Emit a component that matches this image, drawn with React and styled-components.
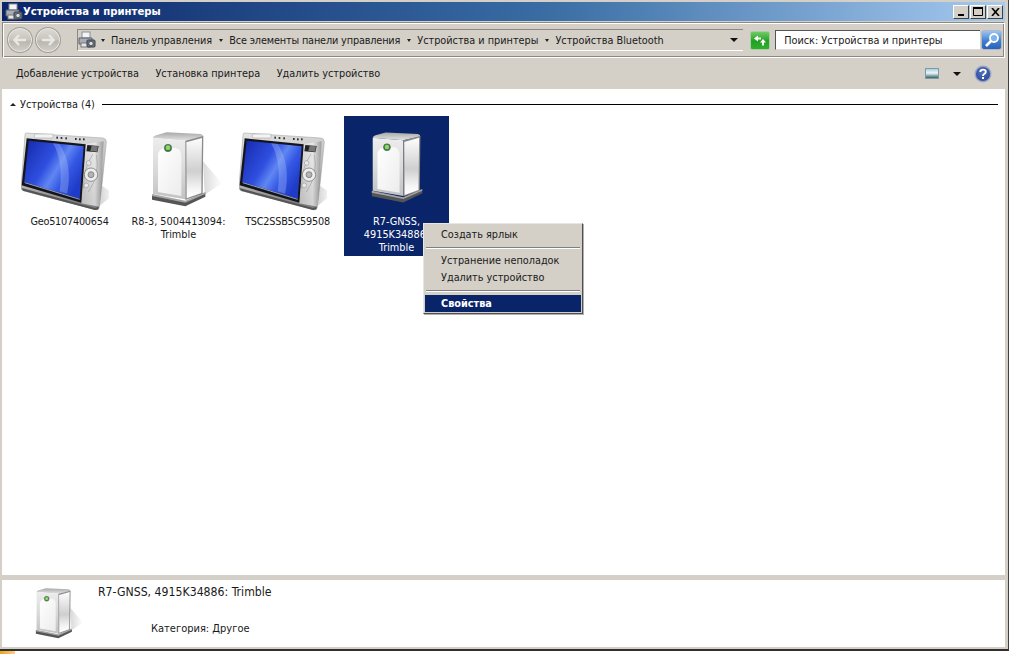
import React from 'react'
import styled, { createGlobalStyle } from 'styled-components'

const GlobalStyle = createGlobalStyle`
	html, body {
		margin: 0;
		padding: 0;
		background: #fff;
	}
	* {
		box-sizing: border-box;
	}
`

const Page = styled.div`
	width: 1009px;
	height: 654px;
	overflow: hidden;
	position: relative;
	display: flex;
	flex-direction: column;
	font-family: 'DejaVu Sans Condensed', 'DejaVu Sans', sans-serif;
	font-stretch: condensed;
	font-size: 10.8px;
	color: #1a1a1a;
`

const Window = styled.div`
	height: 651px;
	display: flex;
	flex-direction: column;
	background: #d4d0c8;
	border-right: 1px solid #404040;
	border-bottom: 2px solid #303030;
	padding: 2px 3px 2px 2px;
`

const TitleBar = styled.div`
	height: 19px;
	flex: none;
	display: flex;
	align-items: center;
	padding: 0 2px 0 3px;
	background: linear-gradient(90deg, #0a246a 0%, #3a6ea5 55%, #a6caf0 100%);
	color: #fff;
	font-weight: bold;
	font-size: 11.25px;
`

const TitleText = styled.span`
	flex: 1;
`

const WinButtons = styled.div`
	display: flex;
	gap: 1px;
`

const WinButton = styled.div`
	width: 16px;
	height: 14px;
	background: #d4d0c8;
	border: 1px solid;
	border-color: #fff #404040 #404040 #fff;
	display: flex;
	align-items: center;
	justify-content: center;
`

const AddressBar = styled.div`
	height: 36px;
	flex: none;
	margin-top: 1px;
	display: flex;
	align-items: center;
	padding: 0 2px 0 4px;
	border: 1px solid #8a8880;
	border-right-color: #fff;
	border-bottom-color: #fff;
	box-shadow: inset 1px 1px 0 #fff, inset -1px -1px 0 #8a8880;
`

const NavButton = styled.div`
	width: 26px;
	height: 26px;
	border-radius: 50%;
	margin-right: 2px;
	background: linear-gradient(180deg, #dddbd5 0%, #c6c4bc 50%, #b8b6ae 55%, #d2d0ca 100%);
	border: 1px solid #a09e98;
	box-shadow: inset 0 0 0 1px #e8e7e2;
	display: flex;
	align-items: center;
	justify-content: center;
`

const Crumbs = styled.div`
	width: 667px;
	height: 22px;
	margin-left: 14px;
	display: flex;
	align-items: center;
	border-top: 1px solid #8a8880;
	border-left: 1px solid #8a8880;
	border-bottom: 1px solid #fff;
`

const CrumbIcon = styled.div`
	width: 18px;
	height: 18px;
	margin-right: 5px;
	flex: none;
`

const Crumb = styled.span`
	display: flex;
	align-items: center;
	white-space: nowrap;
	margin-right: 7px;
	letter-spacing: ${props => (props.$tight ? '-0.15px' : '0')};
	&::before {
		content: '';
		margin-right: 6px;
		border-top: 3px solid #222;
		border-left: 2.5px solid transparent;
		border-right: 2.5px solid transparent;
	}
`

const DropArrow = styled.div`
	width: 0;
	height: 0;
	flex: none;
	border-top: 4px solid #111;
	border-left: 4px solid transparent;
	border-right: 4px solid transparent;
	margin-left: ${props => (props.$left ? `${props.$left}px` : 'auto')};
	margin-right: ${props => props.$right || 0}px;
`

const GoButton = styled.div`
	width: 20px;
	height: 19px;
	margin-left: 7px;
	border-radius: 2px;
	border: 1px solid #a8cfa4;
	background: linear-gradient(180deg, #6ecb66 0%, #22a022 55%, #2fb02f 100%);
	display: flex;
	align-items: center;
	justify-content: center;
`

const SearchBox = styled.div`
	width: 205px;
	height: 20px;
	margin-left: 5px;
	padding-left: 8px;
	display: flex;
	align-items: center;
	background: #fff;
	border-top: 1px solid #555;
	border-left: 1px solid #555;
	border-bottom: 1px solid #ddd;
	white-space: nowrap;
`

const SearchButton = styled.div`
	width: 21px;
	height: 20px;
	margin-left: 1px;
	border-radius: 3px;
	border: 1px solid #b0b8c8;
	background: linear-gradient(180deg, #9cc4f0 0%, #3f7fd0 55%, #2a62b8 100%);
	display: flex;
	align-items: center;
	justify-content: center;
`

const Toolbar = styled.div`
	height: 31px;
	flex: none;
	display: flex;
	align-items: center;
	padding-left: 14px;
	padding-right: 13px;
	gap: 16.5px;
`

const ToolItem = styled.span`
	white-space: nowrap;
`

const ToolRight = styled.div`
	margin-left: auto;
	display: flex;
	align-items: center;
`

const ViewIcon = styled.div`
	width: 14px;
	height: 11px;
	border: 1px solid #7f98a2;
	background: linear-gradient(180deg, #a8d0e4 0%, #eef6f6 45%, #2f6466 100%);
`

const HelpIcon = styled.svg`
	margin-left: 13px;
	flex: none;
`

const Content = styled.div`
	flex: 1;
	background: #fff;
	padding: 9px 7px 0 6px;
`

const GroupHeader = styled.div`
	display: flex;
	align-items: center;
	height: 12px;
`

const GroupCaret = styled.div`
	width: 0;
	height: 0;
	border-bottom: 3px solid #222;
	border-left: 3px solid transparent;
	border-right: 3px solid transparent;
	margin-left: 2px;
	margin-right: 4px;
`

const GroupLine = styled.div`
	flex: 1;
	height: 1px;
	background: #000;
	margin-left: 7px;
`

const Items = styled.div`
	display: flex;
	gap: 4px;
	margin-top: 6px;
	margin-left: 9px;
`

const Item = styled.div`
	width: 105px;
	height: 140px;
	padding-top: 16px;
	display: flex;
	flex-direction: column;
	align-items: center;
	text-align: center;
	line-height: 13px;
	background: ${props => (props.$selected ? '#0a246a' : 'transparent')};
	color: ${props => (props.$selected ? '#fff' : '#1a1a1a')};
`

const ItemIcon = styled.div`
	height: 83px;
	flex: none;
	display: flex;
	align-items: flex-start;
	justify-content: center;
	margin-left: ${props => props.$shift || 0}px;
`

const ItemLabel = styled.div`
	letter-spacing: ${props => (props.$tight ? '-0.23px' : '0')};
`

const Divider = styled.div`
	height: 5px;
	flex: none;
	background: #d4d0c8;
`

const Details = styled.div`
	height: 67px;
	flex: none;
	background: #fff;
	display: flex;
	padding-left: 31px;
`

const DetailIcon = styled.div`
	width: 51px;
	padding-top: 8px;
	flex: none;
`

const DetailText = styled.div`
	margin-left: 14px;
	padding-top: 5px;
	display: flex;
	flex-direction: column;
`

const DetailName = styled.div`
	font-size: 12.2px;
	height: 37px;
`

const DetailCategory = styled.div`
	margin-left: 53px;
	font-size: 11px;
`

const Menu = styled.div`
	position: absolute;
	left: 423px;
	top: 223px;
	width: 160px;
	height: 91px;
	background: #d4d0c8;
	border: 1px solid;
	border-color: #e8e6e0 #505050 #505050 #e8e6e0;
	box-shadow: 1px 1px 0 #b0b0b0;
	padding: 2px 1px;
`

const MenuItem = styled.div`
	height: 17px;
	line-height: 17px;
	padding-left: 16px;
	font-weight: ${props => (props.$active ? 'bold' : 'normal')};
	background: ${props => (props.$active ? '#0a246a' : 'transparent')};
	color: ${props => (props.$active ? '#fff' : '#1a1a1a')};
`

const MenuSep = styled.div`
	height: 2px;
	margin: 4px 1px 3px;
	border-top: 1px solid #808080;
	border-bottom: 1px solid #fff;
`

const BottomStrip = styled.div`
	height: 3px;
	flex: none;
	background: #fff;
`

const TaskIcon = styled.div`
	width: 15px;
	height: 3px;
	background: linear-gradient(90deg, #f0a020, #f8d080);
`

const PrinterIcon = () => (
	<svg width='18' height='18' viewBox='0 0 18 18'>
		<rect x='4' y='1' width='8' height='6' fill='#f4f4f4' stroke='#8a8f98' />
		<path d='M1 7 H14 V13 H1 Z' fill='#a9aeb6' stroke='#5c6068' />
		<rect x='3' y='12' width='9' height='4' fill='#e6e6e6' stroke='#777' />
		<rect x='9' y='9' width='8' height='7' rx='1' fill='#6f7682' stroke='#3c3f46' />
		<circle cx='13' cy='12.5' r='2.2' fill='#cfe0ee' stroke='#333' strokeWidth='.7' />
	</svg>
)

const NavArrow = ({ right }) => (
	<svg width='14' height='12' viewBox='0 0 14 12' style={{ transform: right ? 'scaleX(-1)' : 'none' }}>
		<path d='M6 1 L1.5 6 L6 11 M2 6 H13' fill='none' stroke='#e9e8e3' strokeWidth='2.4' />
	</svg>
)

// drawn in the coordinates of a 3x crop of the icon
const TabletIcon = ({ id }) => (
	<svg width='88' height='80' viewBox='12 12 264 240'>
		<defs>
			<linearGradient id={`${id}body`} x1='0' y1='0' x2='.25' y2='1'>
				<stop offset='0' stopColor='#e6e6e6' />
				<stop offset='.6' stopColor='#bcbcbc' />
				<stop offset='1' stopColor='#808080' />
			</linearGradient>
			<linearGradient id={`${id}side`} x1='0' y1='0' x2='1' y2='0'>
				<stop offset='0' stopColor='#d0d0d0' />
				<stop offset='.6' stopColor='#f0f0f0' />
				<stop offset='1' stopColor='#8c8c8c' />
			</linearGradient>
			<linearGradient id={`${id}screen`} x1='0' y1='0' x2='1' y2='.6'>
				<stop offset='0' stopColor='#1428a8' />
				<stop offset='.45' stopColor='#2f4fe0' />
				<stop offset='.62' stopColor='#5f86f2' />
				<stop offset='.78' stopColor='#3558e4' />
				<stop offset='1' stopColor='#1f3cc8' />
			</linearGradient>
			<linearGradient id={`${id}drop`} x1='0' y1='0' x2='1' y2='0'>
				<stop offset='0' stopColor='#aaa' stopOpacity='.6' />
				<stop offset='1' stopColor='#aaa' stopOpacity='0' />
			</linearGradient>
		</defs>
		<path d='M250 170 L292 198 L240 240 Z' fill={`url(#${id}drop)`} />
		<path d='M28 15 L258 30 Q268 32 268 42 L256 160 L247 236 Q245 248 234 245 L18 188 Q10 184 12 176 L24 22 Q24 15 28 15 Z' fill={`url(#${id}body)`} stroke='#9a9a9a' strokeWidth='1.5' />
		<path d='M205 48 L260 40 L248 236 L192 226 Z' fill={`url(#${id}side)`} opacity='.75' />
		<path d='M14 180 L234 240 L245 236 L244 244 L234 246 L18 188 Z' fill='#555' />
		<path d='M29 31 L206 49 L193 224 L14 172 Z' fill='#14141c' />
		<path d='M35 38 L200 55 L188 212 L22 162 Z' fill={`url(#${id}screen)`} />
		<path d='M108 46 Q140 100 128 190 L150 197 Q168 110 128 48 Z' fill='#a8c0fa' opacity='.35' />
		<path d='M23 164 L188 214' stroke='#dfe6ff' strokeWidth='2' />
		<rect x='52' y='18' width='56' height='12' rx='2' fill='#f4f4f4' stroke='#9a9a9a' strokeWidth='1.5' />
		<path d='M211 51 L245 54 L241 73 L208 70 Z' fill='#222' />
		<path d='M224 53 L243 55 L240 71 L220 69 Z' fill='#777' />
		<path d='M228 78 Q198 120 200 182 M238 80 Q250 140 214 192' fill='none' stroke='#8f8f8f' strokeWidth='1.5' />
		<circle cx='222' cy='140' r='20' fill='#ededed' stroke='#666' strokeWidth='2' />
		<circle cx='222' cy='140' r='9' fill='#b4b4b4' stroke='#666' strokeWidth='2' />
		<circle cx='215' cy='105' r='7' fill='#e8e8e8' stroke='#888' strokeWidth='1.5' />
		<circle cx='208' cy='172' r='7' fill='#e8e8e8' stroke='#888' strokeWidth='1.5' />
		<g fill='#333'>
			<rect x='118' y='26' width='5' height='6' />
			<rect x='131' y='27' width='5' height='6' />
			<rect x='145' y='28' width='5' height='6' />
			<rect x='174' y='30' width='5' height='6' />
			<rect x='186' y='31' width='5' height='6' />
			<rect x='198' y='31' width='5' height='6' />
		</g>
	</svg>
)

const StorageIcon = ({ id, width = 75, height = 80, shadow = true }) => (
	<svg width={width} height={height} viewBox='0 12 225 240'>
		<defs>
			<linearGradient id={`${id}side`} x1='0' y1='0' x2='0' y2='1'>
				<stop offset='0' stopColor='#fdfdfd' />
				<stop offset='.55' stopColor='#cfcfcf' />
				<stop offset='.85' stopColor='#f6f6f6' />
				<stop offset='1' stopColor='#ffffff' />
			</linearGradient>
			<linearGradient id={`${id}front`} x1='0' y1='0' x2='0' y2='1'>
				<stop offset='0' stopColor='#ededed' />
				<stop offset='.5' stopColor='#dadada' />
				<stop offset='1' stopColor='#c2c2c2' />
			</linearGradient>
			<linearGradient id={`${id}top`} x1='0' y1='0' x2='0' y2='1'>
				<stop offset='0' stopColor='#a8a8a8' />
				<stop offset='1' stopColor='#e4e4e4' />
			</linearGradient>
			<linearGradient id={`${id}panel`} x1='0' y1='0' x2='1' y2='1'>
				<stop offset='0' stopColor='#ffffff' />
				<stop offset='1' stopColor='#ececec' />
			</linearGradient>
			<linearGradient id={`${id}drop`} x1='0' y1='0' x2='1' y2='0'>
				<stop offset='0' stopColor='#aaa' stopOpacity='.45' />
				<stop offset='1' stopColor='#aaa' stopOpacity='0' />
			</linearGradient>
		</defs>
		{shadow && <path d='M165 100 L222 166 L170 200 Z' fill={`url(#${id}drop)`} />}
		<path d='M12 200 L112 222 L172 194 V206 L112 235 L12 215 Z' fill='#555' />
		<path d='M12 198 L112 218 L172 192 V198 L112 224 L12 204 Z' fill='#a4a4a4' />
		<path d='M15 30 Q16 24 24 22 L56 13 L158 18 Q166 20 166 26 L112 38 Z' fill={`url(#${id}top)`} />
		<path d='M15 30 L112 38 V214 L15 198 Z' fill={`url(#${id}front)`} />
		<path d='M112 38 L166 24 L164 198 L112 216 Z' fill='#8a8a8a' />
		<path d='M115 43 L162 30 L160 195 L116 211 Z' fill={`url(#${id}side)`} />
		<path d='M30 84 Q30 62 54 60 H82 Q100 62 100 84 V204 L30 192 Z' fill={`url(#${id}panel)`} />
		<circle cx='60' cy='60' r='11' fill='#3f7a3c' stroke='#5a6a5a' strokeWidth='2' />
		<circle cx='60' cy='59' r='7' fill='#86dc66' />
	</svg>
)

const App = () => (
	<Page>
		<GlobalStyle />
		<Window>
			<TitleBar>
				<PrinterIcon />
				<TitleText>Устройства и принтеры</TitleText>
				<WinButtons>
					<WinButton>
						<svg width='9' height='9' viewBox='0 0 9 9'>
							<rect x='1' y='7' width='6' height='2' fill='#000' />
						</svg>
					</WinButton>
					<WinButton>
						<svg width='10' height='9' viewBox='0 0 10 9'>
							<path d='M0.5 1.5 H9.5 V8.5 H0.5 Z' fill='none' stroke='#000' />
							<rect x='0' y='0' width='10' height='2' fill='#000' />
						</svg>
					</WinButton>
					<WinButton>
						<svg width='9' height='8' viewBox='0 0 9 8'>
							<path d='M1 0 L8 8 M8 0 L1 8' stroke='#000' strokeWidth='1.6' />
						</svg>
					</WinButton>
				</WinButtons>
			</TitleBar>
			<AddressBar>
				<NavButton>
					<NavArrow />
				</NavButton>
				<NavButton>
					<NavArrow right />
				</NavButton>
				<Crumbs>
					<CrumbIcon>
						<PrinterIcon />
					</CrumbIcon>
					<Crumb>Панель управления</Crumb>
					<Crumb $tight>Все элементы панели управления</Crumb>
					<Crumb>Устройства и принтеры</Crumb>
					<Crumb>Устройства Bluetooth</Crumb>
					<DropArrow $right={5} />
				</Crumbs>
				<GoButton>
					<svg width='14' height='11' viewBox='0 0 14 11'>
						<path d='M1 3.5 L5 .5 V2.5 H8 V4.5 H5 V6.5 Z M10 4 L13 7.5 H11 V10.5 H9 V7.5 H7 Z' fill='#fff' />
					</svg>
				</GoButton>
				<SearchBox>Поиск: Устройства и принтеры</SearchBox>
				<SearchButton>
					<svg width='16' height='16' viewBox='0 0 16 16'>
						<circle cx='10' cy='6' r='4' fill='#7fb4ea' stroke='#fff' strokeWidth='1.8' />
						<path d='M7 9 L2 14' stroke='#fff' strokeWidth='2.6' />
					</svg>
				</SearchButton>
			</AddressBar>
			<Toolbar>
				<ToolItem>Добавление устройства</ToolItem>
				<ToolItem>Установка принтера</ToolItem>
				<ToolItem>Удалить устройство</ToolItem>
				<ToolRight>
					<ViewIcon />
					<DropArrow $left={14} />
					<HelpIcon width='18' height='18' viewBox='0 0 18 18'>
						<defs>
							<radialGradient id='help' cx='.45' cy='.4' r='.7'>
								<stop offset='0' stopColor='#4f70c0' />
								<stop offset='1' stopColor='#2a4590' />
							</radialGradient>
						</defs>
						<circle cx='9' cy='9' r='7.8' fill='url(#help)' stroke='#9aa6c4' strokeWidth='1.4' />
						<path d='M6.2 7 Q6.4 4.6 9 4.6 Q11.8 4.6 11.8 6.8 Q11.8 8.2 10.2 9 Q9 9.6 9 11' fill='none' stroke='#fff' strokeWidth='1.9' />
						<rect x='8' y='12' width='2' height='2' fill='#fff' />
					</HelpIcon>
				</ToolRight>
			</Toolbar>
			<Content>
				<GroupHeader>
					<GroupCaret />
					Устройства (4)
					<GroupLine />
				</GroupHeader>
				<Items>
					<Item>
						<ItemIcon $shift={-9}>
							<TabletIcon id='a' />
						</ItemIcon>
						<ItemLabel $tight>Geo5107400654</ItemLabel>
					</Item>
					<Item>
						<ItemIcon $shift={14}>
							<StorageIcon id='b' />
						</ItemIcon>
						<ItemLabel>
							R8-3, 5004413094:
							<br />
							Trimble
						</ItemLabel>
					</Item>
					<Item>
						<ItemIcon $shift={-9}>
							<TabletIcon id='c' />
						</ItemIcon>
						<ItemLabel $tight>TSC2SSB5C59508</ItemLabel>
					</Item>
					<Item $selected>
						<ItemIcon $shift={14}>
							<StorageIcon id='d' width={71} height={76} shadow={false} />
						</ItemIcon>
						<ItemLabel>
							R7-GNSS,
							<br />
							4915K34886:
							<br />
							Trimble
						</ItemLabel>
					</Item>
				</Items>
			</Content>
			<Divider />
			<Details>
				<DetailIcon>
					<StorageIcon id='e' width={51} height={54} />
				</DetailIcon>
				<DetailText>
					<DetailName>R7-GNSS, 4915K34886: Trimble</DetailName>
					<DetailCategory>Категория: Другое</DetailCategory>
				</DetailText>
			</Details>
		</Window>
		<BottomStrip>
			<TaskIcon />
		</BottomStrip>
		<Menu>
			<MenuItem>Создать ярлык</MenuItem>
			<MenuSep />
			<MenuItem>Устранение неполадок</MenuItem>
			<MenuItem>Удалить устройство</MenuItem>
			<MenuSep />
			<MenuItem $active>Свойства</MenuItem>
		</Menu>
	</Page>
)

export default App
